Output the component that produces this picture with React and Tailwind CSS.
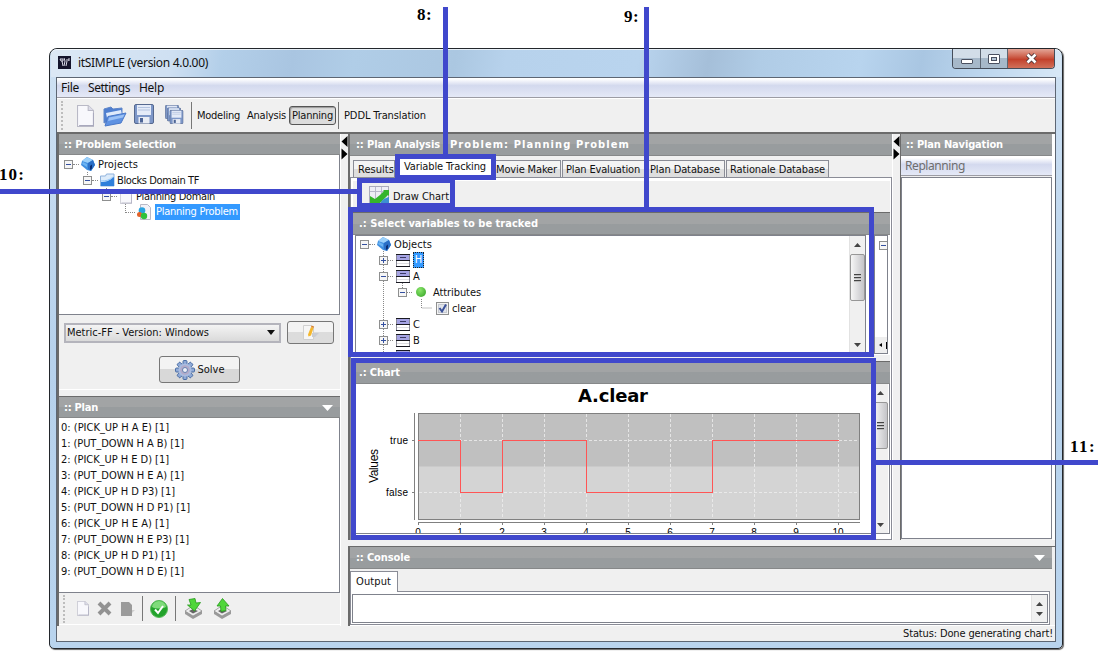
import { useLayoutEffect, useRef } from "react";
import clsx from "clsx";

/* Text set to a given pixel width by evening out its letter spacing. */
function T({ w, className, children }) {
  const ref = useRef(null);
  useLayoutEffect(() => {
    const el = ref.current;
    el.style.letterSpacing = "0px";
    const natural = el.getBoundingClientRect().width;
    el.style.letterSpacing = `${(w - natural) / el.textContent.length}px`;
  }, [w]);
  return (
    <span ref={ref} className={clsx("inline-block shrink-0 whitespace-pre", className)}>
      {children}
    </span>
  );
}

/* ---------- icons ---------- */
const PageIcon = ({ className }) => (
  <svg viewBox="0 0 16 22" preserveAspectRatio="none" className={className}>
    <path d="M.5.5h10l5 5v16H.5z" fill="#f8f8fc" stroke="#b9b9c6" />
    <path d="M10.500.5v5h5" fill="#dcdce8" stroke="#b9b9c6" />
    <path d="M2 20.500h13.500V8" fill="none" stroke="#a9a9bd" />
  </svg>
);
const FolderIcon = () => (
  <svg width="24" height="22" viewBox="0 0 24 22">
    <path d="M1 18V4l7-2 2 2 9-1v6z" fill="#4f7fd0" stroke="#5f86c8" />
    <path d="M3 8l15-3 1 5-14 8z" fill="#dfeafb" />
    <path d="M5 11.500L23 8l-5 10L2 21z" fill="#5f92e2" stroke="#4a78c8" />
    <path d="M6 12.500L21.500 9.500l-1.500 3L5 16z" fill="#9cc2f6" />
  </svg>
);
const Floppy = ({ x = 0, y = 0, s = 20 }) => (
  <svg x={x} y={y} width={s} height={s} viewBox="0 0 20 20">
    <rect x=".5" y=".5" width="19" height="19" rx="1.500" fill="#7d97c8" stroke="#56698f" />
    <rect x="3" y="1" width="14" height="10" fill="#e4ebf8" />
    <path d="M4 3.500h12M4 6h12" stroke="#b4c4e0" />
    <rect x="4.500" y="13" width="11" height="6.500" fill="#e8ecf4" />
    <rect x="6" y="14" width="3" height="4.500" fill="#4d6596" />
  </svg>
);
const SaveAllIcon = () => (
  <svg width="19" height="20" viewBox="0 0 19 20">
    <Floppy s={14} />
    <Floppy x={2} y={2.500} s={14} />
    <Floppy x={4.500} y={5} s={14} />
  </svg>
);
const CubeIcon = () => (
  <svg width="14" height="16" viewBox="0 0 14 16" className="shrink-0">
    <path d="M1 5l5-4 6 3 2 5-4 6-4-1-6-5z" fill="#3f8fe0" />
    <path d="M1 5l5-4 6 3-5 3z" fill="#9bd0fa" />
    <path d="M7 7l5-3 2 5-4 6-3-2z" fill="#2a6fc6" />
    <path d="M9 10l2-1.500v4l-2 1.500z" fill="#0b2f74" />
    <path d="M2 6l4 2v3L1 8z" fill="#6cb4f3" />
  </svg>
);
const BlueFolder = () => (
  <svg width="15" height="14" viewBox="0 0 15 14" className="shrink-0">
    <path d="M.5 3h5l1-2h7.500v12H.5z" fill="#dcebfa" stroke="#8fb2dc" />
    <path d="M1 9c5 0 8-1 13-5v9H1z" fill="#2f7fdb" />
    <path d="M1 8c5 0 9-1 12-4" stroke="#8fc4f8" fill="none" />
  </svg>
);
const ProblemIcon = () => (
  <svg width="14" height="16" viewBox="0 0 14 16" className="shrink-0">
    <path d="M3.500.500h7l3 3v12h-10z" fill="#f2f2f8" stroke="#b9b9c6" />
    <circle cx="5" cy="6.500" r="3.300" fill="#29a3e0" />
    <circle cx="2.500" cy="10.500" r="2.500" fill="#e2622a" />
    <circle cx="7" cy="12" r="3.200" fill="#2fc13b" />
  </svg>
);
const ClassIcon = () => (
  <svg width="14" height="13" viewBox="0 0 14 13" className="shrink-0">
    <rect x=".5" y=".5" width="13" height="12" fill="#fff" stroke="#8a8a96" />
    <rect x="1" y="1" width="12" height="5" fill="#a5a3e3" />
    <path d="M0 .5h14M0 6.500h14M0 12.500h14" stroke="#1a1a22" />
    <path d="M4 3.500h6" stroke="#3a3a66" />
    <path d="M1 9.500h12" stroke="#dcdce0" />
  </svg>
);
const Expander = ({ plus, className }) => (
  <svg width="9" height="9" viewBox="0 0 9 9" className={clsx("shrink-0", className)}>
    <rect x=".5" y=".5" width="8" height="8" fill="#f6f6f6" stroke="#8e8f8f" />
    <path d={plus ? "M2 4.500h5M4.500 2v5" : "M2 4.500h5"} stroke="#3450a0" />
  </svg>
);
const Dots = ({ className }) => <i className={clsx("block h-px shrink-0 border-t border-dotted border-[#888]", className)} />;
const Gear = () => (
  <svg width="20" height="20" viewBox="-10 -10 20 20">
    {[0, 45, 90, 135].map((a) => (
      <rect key={a} x="-2" y="-9.500" width="4" height="19" rx="1" fill="#8fa9d6" stroke="#3f659f" strokeWidth=".9" transform={`rotate(${a})`} />
    ))}
    <circle r="6.600" fill="#a9bce0" />
    <circle r="4.800" fill="#b3abc9" />
    <circle r="2.500" fill="#eef1f8" stroke="#6581b0" />
  </svg>
);
const EditIcon = () => (
  <svg width="16" height="15" viewBox="0 0 16 15">
    <path d="M.500.500h8l2 2v12H.500z" fill="#f6f6f6" stroke="#d0d0d0" />
    <path d="M9 8h7l-4 4H9z" fill="#c9ccd2" />
    <path d="M5 9.500L8 2l2.500 1L8 10.500l-2.500 1z" fill="#f5b82e" />
    <path d="M8 2l.6-1.500 2.500 1-.6 1.500z" fill="#d9822f" />
  </svg>
);
const Tri = ({ dir, className }) => (
  <svg viewBox="0 0 10 6" preserveAspectRatio="none" className={clsx("block shrink-0", className)}>
    <path d={dir === "up" ? "M0 6l5-6 5 6z" : "M0 0h10l-5 6z"} fill="currentColor" />
  </svg>
);
const ChartIcon = () => (
  <svg width="20" height="20" viewBox="0 0 20 20" className="shrink-0">
    <rect x=".5" y=".5" width="19" height="19" fill="#eeeef6" stroke="#aaaabc" />
    <path d="M6.500 1v18M12.500 1v18M1 5.500h18" stroke="#b9b9cc" />
    <path d="M1 10l5 3 5-4 4-4-1-1h6v6l-1-1-9 9-3-1-3 3-3-2z" fill="#35b52c" />
    <path d="M11 20c0-5 4-8 9-9v9z" fill="#3d8fd2" />
  </svg>
);
const CheckBall = () => (
  <svg width="18" height="18" viewBox="0 0 18 18">
    <circle cx="9" cy="9" r="8.500" fill="#22a32b" stroke="#58b95a" />
    <path d="M2 7a7 6 0 0 1 14 0c-4 2-10 2-14 0z" fill="#7fdb7b" />
    <path d="M5 9.500l3 3.500 5-7" fill="none" stroke="#fff" strokeWidth="2" />
  </svg>
);
const Disk = ({ up }) => (
  <svg width="19" height="21" viewBox="0 0 19 21">
    <path d="M1 13l6-4h5l6 4v3l-9 5-8-5z" fill="#9a9a9a" />
    <path d="M1 13l6-4h5l6 4-9 5z" fill="#ededed" stroke="#858585" strokeWidth=".6" />
    <path d="M5 13l4-2 5 2-5 2.500z" fill="#666" />
    <path d={up ? "M9.500.500L16 8h-3.500l.5 4.500-5 1L7.500 8H4z" : "M5 1.500l6-1 1 4.500 4.500-.5L10.500 13 3.500 7H7z"} fill="#4fd63a" stroke="#26991c" strokeWidth=".8" />
  </svg>
);

/* ---------- shared parts ---------- */
const Header = ({ title, w, arrow, className, children }) => (
  <div className={clsx("flex shrink-0 items-center border-b border-[#868889] bg-linear-to-b from-[#a2a4a5] from-50% to-[#989c9e] to-50% pr-[7px] font-bold text-white", className)}>
    <T w={w}>{title}</T>
    {children}
    {arrow && <Tri className="ml-auto h-[6px] w-[11px]" />}
  </div>
);
const Grip = ({ className }) => <i className={clsx("block w-0 shrink-0 border-l-2 border-dotted border-[#bdbdbd]", className)} />;
const Splitter = ({ className }) => (
  <div className={clsx("shrink-0 bg-[#f0f0f0]", className)}>
    <svg width="7" height="24" viewBox="0 0 7 24" className="block">
      <path d="M6.500 0v11L.5 5.500zM.5 12.500v11L6.500 18z" fill="#000" />
    </svg>
  </div>
);
const Scrollbar = ({ thumb, className }) => (
  <div className={clsx("flex w-[16px] shrink-0 flex-col items-center justify-between border-l border-[#e2e2e2] bg-[#f0f0f0] text-[#444]", className)}>
    <Tri dir="up" className="mt-[7px] h-[4px] w-[7px]" />
    {thumb && (
      <div className="mt-[7px] mb-auto flex h-[47px] w-[15px] shrink-0 flex-col items-center justify-center gap-px rounded-[2px] border border-[#979797] bg-linear-to-r from-[#f6f6f6] to-[#c4c4c8]">
        {[0, 1, 2].map((i) => <i key={i} className="h-[2px] w-[7px] border-t border-[#444] bg-[#bbb]" />)}
      </div>
    )}
    <Tri className="mb-[6px] h-[4px] w-[7px]" />
  </div>
);
const Frame = ({ className }) => <div className={clsx("absolute border-[5px] border-[#4048cc]", className)} />;
const Bar = ({ className }) => <div className={clsx("absolute bg-[#4048cc]", className)} />;

const plan = [
  ["0: (PICK_UP H A E) [1]", 108], ["1: (PUT_DOWN H A B) [1]", 123], ["2: (PICK_UP H E D) [1]", 108],
  ["3: (PUT_DOWN H E A) [1]", 123], ["4: (PICK_UP H D P3) [1]", 114], ["5: (PUT_DOWN H D P1) [1]", 129],
  ["6: (PICK_UP H E A) [1]", 108], ["7: (PUT_DOWN H E P3) [1]", 128], ["8: (PICK_UP H D P1) [1]", 114],
  ["9: (PUT_DOWN H D E) [1]", 123],
];

function LeftColumn() {
  return (
    <div className="flex w-[283px] shrink-0 flex-col border-l-2 border-[#6b6b6b]">
      <Header title=":: Problem Selection" w={112} className="h-[21px] pt-[2px] pl-[5px]" />
      <div className="relative h-[160px] shrink-0 border-r border-b border-[#7f828c] bg-white pt-[1px]">
        <svg width="100" height="70" className="absolute top-0 left-0">
          <path d="M28.500 17v4M47.500 33v4M66.500 49v9" stroke="#888" strokeDasharray="1 1" />
        </svg>
        <div className="flex h-4 items-center pl-[5px]"><Expander /><Dots className="mr-[2px] w-[6px]" /><CubeIcon /><T w={40} className="mt-[2px] ml-[3px]">Projects</T></div>
        <div className="flex h-4 items-center pl-[24px]"><Expander /><Dots className="mr-[2px] w-[6px]" /><BlueFolder /><T w={82} className="mt-[2px] ml-[2px]">Blocks Domain TF</T></div>
        <div className="flex h-4 items-center pl-[43px]"><Expander /><Dots className="mr-[3px] w-[6px]" /><PageIcon className="h-[15px] w-[12px] shrink-0" /><T w={79} className="mt-[2px] ml-[4px]">Planning Domain</T></div>
        <div className="flex h-4 items-center pl-[67px]"><Dots className="mr-[2px] w-[9px]" /><ProblemIcon />
          <span className="ml-[4px] flex h-4 w-[85px] items-center bg-[#3399ff] pl-px text-white"><T w={82}>Planning Problem</T></span>
        </div>
      </div>
      <div className="flex h-[75px] shrink-0 flex-col items-center border-b border-white pt-[6px]">
        <div className="flex w-full items-center pl-[5px]">
          <div className="flex h-[20px] w-[217px] items-center justify-between border-2 border-[#b4b4bc] bg-linear-to-b from-[#f4f4f4] to-[#dadada] pr-[4px] pl-px">
            <T w={142}>Metric-FF - Version: Windows</T><Tri className="h-[5px] w-[8px]" />
          </div>
          <button className="ml-[6px] flex h-[23px] w-[47px] items-center justify-center rounded-[3px] border border-[#777] bg-linear-to-b from-[#f3f3f3] from-50% to-[#dcdcdc] to-50%"><EditIcon /></button>
        </div>
        <button className="mt-[12px] flex h-[27px] w-[81px] items-center justify-center gap-[3px] rounded-[3px] border border-[#777] bg-linear-to-b from-[#f3f3f3] from-50% to-[#d8d8d8] to-50%"><Gear /><T w={27}>Solve</T></button>
      </div>
      <div className="mt-[6px] h-px shrink-0 bg-[#6b6b6b]" />
      <Header title=":: Plan" w={34} arrow className="h-[21px] pt-px pl-[5px]" />
      <div className="h-[175px] shrink-0 border-r border-b border-[#7f828c] bg-white pt-px pl-[2px]">
        {plan.map(([t, w]) => <div key={t} className="flex h-4 items-center"><T w={w} className="mt-px">{t}</T></div>)}
      </div>
      <div className="flex h-[31px] shrink-0 items-center pl-[4px]">
        <Grip className="h-[28px]" />
        <PageIcon className="ml-[12px] h-[15px] w-[12px]" />
        <svg width="15" height="15" viewBox="0 0 15 15" className="ml-[8px]"><path d="M2 2l11 11M13 2L2 13" stroke="#929292" strokeWidth="4" /></svg>
        <svg width="15" height="14" viewBox="0 0 15 14" className="ml-[8px]"><path d="M1 0h8l3 3v11H1z" fill="#9b9b9b" /><path d="M12 8h3l-3 3z" fill="#cfcfcf" /></svg>
        <i className="ml-[7px] h-[25px] w-px bg-[#777]" />
        <span className="ml-[7px]"><CheckBall /></span>
        <i className="ml-[7px] h-[25px] w-px bg-[#777]" />
        <span className="ml-[8px]"><Disk /></span>
        <span className="ml-[10px]"><Disk up /></span>
      </div>
      <div className="h-px bg-white" />
    </div>
  );
}

const Tab = ({ w, t, pad, className }) => (
  <div className={clsx("flex h-[17px] shrink-0 items-center border-t border-r border-l border-[#8a8c96] bg-linear-to-b from-[#f4f4f4] from-50% to-[#dedede] to-50%", className)}>
    <T w={w} className={clsx("mt-px", pad)}>{t}</T>
  </div>
);

const TreeRow = ({ label, w, plus, children }) => (
  <div className="flex h-4 shrink-0 items-center pl-[23px]"><Expander plus={plus} /><Dots className="mr-[3px] w-[5px]" /><ClassIcon />
    {children || <T w={w} className="mt-[2px] ml-[3px]">{label}</T>}
  </div>
);

function VariableTree() {
  return (
    <div className="flex h-[119px] w-[511px] shrink-0 border border-[#7f828c] bg-white">
      <div className="relative flex min-w-0 grow flex-col overflow-hidden">
        <svg width="120" height="118" className="absolute top-0 left-0">
          <path d="M27.500 15v104M46.500 47v6M65.500 63v9h10" fill="none" stroke="#888" strokeDasharray="1 1" />
        </svg>
        <div className="relative flex flex-col">
          <div className="flex h-4 items-center pl-[4px]"><Expander /><Dots className="mr-[2px] w-[6px]" /><CubeIcon /><T w={38} className="mt-[2px] ml-[3px]">Objects</T></div>
          <TreeRow plus><span className="ml-[3px] flex h-4 w-[11px] items-center justify-center border border-dotted border-[#222] bg-[#3399ff] text-white">H</span></TreeRow>
          <TreeRow label="A" w={7} />
          <div className="flex h-4 items-center pl-[42px]"><Expander /><Dots className="mr-[4px] w-[5px]" /><i className="size-[10px] rounded-full bg-radial-[at_40%_30%] from-[#8be66b] to-[#2f9f22]" /><T w={48} className="mt-[2px] ml-[7px]">Attributes</T></div>
          <div className="flex h-4 items-center pl-[80px]">
            <svg width="13" height="13" viewBox="0 0 13 13"><rect x=".5" y=".5" width="12" height="12" fill="#f4f4f4" stroke="#8e8f8f" /><rect x="2.500" y="2.500" width="8" height="8" fill="#e0e4ea" stroke="#c6c9d0" /><path d="M3.500 6l2.500 3.500L10 2.500" fill="none" stroke="#3b5199" strokeWidth="2" /></svg>
            <T w={24} className="mt-[2px] ml-[3px]">clear</T>
          </div>
          <TreeRow plus label="C" w={8} />
          <TreeRow plus label="B" w={7} />
          <TreeRow plus label="D" w={7} />
        </div>
      </div>
      <Scrollbar thumb />
    </div>
  );
}

function Chart() {
  const x = (i) => 62.500 + 42 * i;
  const steps = [[0, 1, 56], [1, 2, 108], [2, 4, 56], [4, 7, 108], [7, 10, 56]];
  return (
    <svg width="516" height="149" viewBox="0 0 516 149" className="block shrink-0 bg-white">
      <text x="222" y="17.500" textLength="70" className="font-['DejaVu_Sans'] text-[18px] font-bold [font-stretch:normal]">A.clear</text>
      <rect x="62.500" y="29.500" width="441" height="106" fill="#d4d4d4" />
      <rect x="62.500" y="29.500" width="441" height="53" fill="#c0c0c0" />
      <g stroke="#efefef" strokeDasharray="3 2" opacity=".8">
        {[1, 2, 3, 4, 5, 6, 7, 8, 9, 10].map((i) => <path key={i} d={`M${x(i)} 30v105`} />)}
        <path d="M63 56.500h441M63 108.500h441" />
      </g>
      <rect x="62.500" y="29.500" width="441" height="106" fill="none" stroke="#808080" />
      <path d="M58.500 29v107M56 56.500h3M56 108.500h3M62 138.500h442" stroke="#808080" fill="none" />
      <g fill="#ff5555">
        {steps.map(([a, b, y]) => <rect key={a} x={x(a) - 0.5} y={y} width={x(b) - x(a) + 1} height="1" />)}
        {[1, 2, 4, 7].map((i) => <rect key={i} x={x(i) - 0.5} y="56" width="1" height="53" />)}
      </g>
      <g className="font-['Liberation_Sans',sans-serif] text-[10px]">
        <text x="52" y="60" textAnchor="end" textLength="18">true</text>
        <text x="52" y="112" textAnchor="end" textLength="22">false</text>
        {[0, 1, 2, 3, 4, 5, 6, 7, 8, 9, 10].map((i) => (
          <g key={i}><path d={`M${x(i)} 138v3`} stroke="#808080" /><text x={x(i) - 0.5} y="151.500" textAnchor="middle">{i}</text></g>
        ))}
      </g>
      <text transform="translate(22 99) rotate(-90)" textLength="34" className="font-['Liberation_Sans',sans-serif] text-[12px]">Values</text>
    </svg>
  );
}

function Analysis() {
  return (
    <div className="flex h-[406px] w-[547px] shrink-0 flex-col border-l-2 border-[#6b6b6b]">
      <Header title=":: Plan Analysis" w={84} className="h-[22px] pt-px pl-[6px]"><T w={180} className="ml-[10px]">Problem: Planning Problem</T></Header>
      <div className="flex h-[21px] shrink-0 items-end pl-[3px]">
        <Tab t="Results" w={36} pad="ml-[4px]" className="w-[42px]" />
        <div className="flex h-[20px] w-[99px] shrink-0 items-center bg-white"><T w={82} className="ml-[9px]">Variable Tracking</T></div>
        <Tab t="Movie Maker" w={61} pad="ml-[2px]" className="w-[67px] border-l-0" />
        <Tab t="Plan Evaluation" w={74} pad="ml-[3px]" className="ml-px w-[83px]" />
        <Tab t="Plan Database" w={70} pad="ml-[3px]" className="ml-px w-[79px]" />
        <Tab t="Rationale Database" w={95} pad="ml-[3px]" className="ml-px w-[103px]" />
      </div>
      <div className="flex w-[542px] grow flex-col border border-[#8a8c96] bg-white pt-[3px] pr-[1px] pl-[2px]">
        <div className="flex h-[31px] shrink-0 items-start bg-[#f0f0f0] pt-[5px] pl-[16px]"><ChartIcon /><T w={56} className="mt-[4px] ml-[4px]">Draw Chart</T></div>
        <Header title=".: Select variables to be tracked" w={179} className="h-[23px] border-t border-t-[#6b6b6b] pl-[6px]" />
        <div className="flex h-[120px] shrink-0 bg-white pl-[2px]">
          <VariableTree />
          <div className="ml-[8px] flex h-[119px] w-[14px] flex-col justify-between overflow-hidden border border-[#7f828c] bg-white">
            <Expander className="mt-[5px] ml-[4px]" />
            <div className="flex h-[16px] items-center gap-[4px] bg-[#eee] pl-[4px]">
              <svg width="3" height="4" className="shrink-0"><path d="M3 0v4L0 2z" /></svg><i className="h-[7px] w-px bg-black" />
            </div>
          </div>
        </div>
        <div className="h-[6px] shrink-0 bg-[#f0f0f0]" />
        <Header title=".: Chart" w={41} className="h-[23px] border-t border-t-[#6b6b6b] pl-[6px]" />
        <div className="flex h-[150px] shrink-0 border-r border-b border-[#7f828c] pl-[3px]">
          <Chart />
          <Scrollbar thumb />
        </div>
      </div>
    </div>
  );
}

function Console() {
  return (
    <div className="mt-[6px] flex grow flex-col border-t border-l-2 border-[#6b6b6b]">
      <Header title=":: Console" w={54} arrow className="mr-[3px] h-[22px] pl-[6px]" />
      <div className="flex h-[22px] shrink-0 items-end">
        <div className="relative z-10 -mb-px flex h-[21px] w-[48px] items-center border-t border-r border-l border-[#8a8c96] bg-white pl-[5px]"><T w={35}>Output</T></div>
      </div>
      <div className="mr-[5px] h-[34px] border border-[#8a8c96] bg-white pt-[2px] pr-px pl-px">
        <div className="flex h-[29px] justify-end border border-[#7f828c] bg-white"><Scrollbar /></div>
      </div>
      <div className="grow bg-white" />
    </div>
  );
}

export default function App() {
  return (
    <div className="relative h-[651px] w-[1103px] overflow-hidden bg-white pt-[48px] pl-[49px] font-['DejaVu_Sans_Condensed','DejaVu_Sans',sans-serif] text-[11px] leading-[14px] text-[#111] [font-stretch:semi-condensed]">
      <div className="flex h-[601px] w-[1014px] flex-col rounded-[8px] rounded-b-[5px] border border-[#23272c] bg-linear-to-b from-[#cfe1f3] via-[#b7d2ec] to-[#b9d4ee] px-[6px] shadow-[1px_1px_1px_#666]">
        <div className="-mx-[5px] flex h-[28px] shrink-0 items-start rounded-t-[6px] border-t border-white/70 bg-[linear-gradient(100deg,#dce8f5_0%,#cfe0f2_12%,#b3cfe9_17%,#a9c5e1_24%,#b0cde7_30%,#abc7e1_40%,#b7d2ec_45%,#b9d4ee_58%,#a5bfd9_65%,#b0cce6_70%,#b8d4ee_80%,#a9c6e2_86%,#bcd6ee_92%,#d8e8f6_100%)] px-[7px]">
          <svg width="13" height="13" viewBox="0 0 13 13" className="mt-[6px]"><rect width="13" height="13" fill="#14142c" /><path d="M2 3h3v2H3zM4 5l1 5M6 2l1 3-1 5M8 4h3M9 5l-1 5M11 2v3" stroke="#dadae8" fill="none" /></svg>
          <T w={130} className="mt-[5px] ml-[7px] font-['Noto_Sans',sans-serif] text-[12px] leading-[16px]">itSIMPLE (version 4.0.00)</T>
          <div className="-mt-px -mr-[1px] ml-auto flex h-[20px] w-[103px] overflow-hidden rounded-b-[4px] border border-t-0 border-[#454d5a]">
            <div className="flex w-[28px] items-center justify-center border-r border-[#5c6673] bg-linear-to-b from-[#d2dde8] from-45% to-[#a6b8c9] to-50% pt-[5px]"><i className="h-[5px] w-[12px] rounded-[1px] border border-[#4a5060] bg-white" /></div>
            <div className="flex w-[27px] items-center justify-center border-r border-[#5c6673] bg-linear-to-b from-[#d2dde8] from-45% to-[#a6b8c9] to-50%"><i className="flex h-[10px] w-[12px] items-center justify-center rounded-[1px] border border-[#4a5060] bg-white"><b className="h-[4px] w-[6px] border border-[#4a5060] bg-[#b4c4d4]" /></i></div>
            <div className="flex grow items-center justify-center bg-linear-to-b from-[#e2a598] via-[#c3412c] via-55% to-[#d0705a]">
              <svg width="13" height="11" viewBox="0 0 13 11"><path d="M2.500 1.500l8 8M10.500 1.500l-8 8" stroke="#4d3438" strokeWidth="4.400" /><path d="M2.500 1.500l8 8M10.500 1.500l-8 8" stroke="#fff" strokeWidth="2.600" /></svg>
            </div>
          </div>
        </div>
        <div className="flex h-[565px] w-[1000px] shrink-0 flex-col border border-[#5d6673] bg-[#f0f0f0]">
          <div className="flex h-[20px] shrink-0 items-center border-b border-[#9c9ca4] bg-linear-to-b from-white from-5% via-[#d3d9ee] via-40% to-[#e5e9f7] pl-[4px] font-['Noto_Sans',sans-serif] text-[12px]">
            <T w={18}>File</T><T w={42} className="ml-[9px]">Settings</T><T w={25} className="ml-[9px]">Help</T>
          </div>
          <div className="flex h-[34px] shrink-0 items-center border-t border-white pl-[4px]">
            <Grip className="h-[29px]" />
            <PageIcon className="ml-[14px] h-[22px] w-[17px]" />
            <span className="ml-[9px]"><FolderIcon /></span>
            <svg width="20" height="20" className="ml-[7px] -mt-[3px]"><Floppy /></svg>
            <span className="-mt-[2px] ml-[11px]"><SaveAllIcon /></span>
            <i className="ml-[7px] h-[27px] w-px bg-[#777]" />
            <T w={43} className="ml-[5px]">Modeling</T><T w={39} className="ml-[7px]">Analysis</T>
            <span className="ml-[3px] flex h-[19px] w-[47px] items-center justify-center rounded-[3px] border border-[#555] bg-[#dcdcdc] shadow-[inset_1px_1px_1px_#999]"><T w={41}>Planning</T></span>
            <i className="ml-[2px] h-[27px] w-px bg-[#777]" />
            <T w={82} className="ml-[5px]">PDDL Translation</T>
          </div>
          <div className="h-[2px] shrink-0 bg-[#6b6b6b]" />
          <div className="flex h-[492px] shrink-0">
            <LeftColumn />
            <div className="w-px bg-white" />
            <Splitter className="w-[7px] pt-[2px]" />
            <div className="flex grow flex-col">
              <div className="flex h-[406px] shrink-0">
                <Analysis />
                <Splitter className="-ml-[3px] w-[8px] border-l border-white pt-[2px]" />
                <div className="flex w-[152px] shrink-0 flex-col border-l border-[#6b6b6b]">
                  <Header title=":: Plan Navigation" w={97} className="h-[22px] pt-px pl-[5px]" />
                  <div className="flex h-[20px] shrink-0 items-center border-b border-[#9c9ca4] bg-linear-to-b from-white from-10% via-[#d3d9ee] via-45% to-[#e5e9f7] pl-[4px] text-[#6e6e6e]"><T w={60} className="font-['Noto_Sans',sans-serif] text-[12px]">Replanning</T></div>
                  <div className="mt-px h-[362px] border border-[#7f828c] bg-white" />
                </div>
                <div className="grow bg-white" />
              </div>
              <Console />
            </div>
          </div>
          <div className="flex h-[15px] shrink-0 items-center justify-end pr-[2px]"><T w={150}>Status: Done generating chart!</T></div>
        </div>
      </div>

      {/* numbered callouts */}
      <Bar className="top-[7px] left-[443px] h-[148px] w-[5px]" />
      <Frame className="top-[154px] left-[395px] h-[26px] w-[101px]" />
      <Bar className="top-[7px] left-[644px] h-[201px] w-[5px]" />
      <Frame className="top-[207px] left-[348px] h-[150px] w-[526px]" />
      <Bar className="top-[189px] left-0 h-[5px] w-[358px]" />
      <Frame className="top-[178px] left-[357px] h-[30px] w-[98px]" />
      <Frame className="top-[358px] left-[351px] h-[182px] w-[525px]" />
      <Bar className="top-[460px] left-[875px] h-[5px] w-[223px]" />
      <div className="font-['Liberation_Serif',serif] text-[17px] leading-[18px] font-bold text-black [font-stretch:normal]">
        <span className="absolute top-[6px] left-[417px]"><T w={15}>8:</T></span>
        <span className="absolute top-[8px] left-[624px]"><T w={15}>9:</T></span>
        <span className="absolute top-[166px] left-[-1px]"><T w={26}>10:</T></span>
        <span className="absolute top-[438px] left-[1070px]"><T w={26}>11:</T></span>
      </div>
    </div>
  );
}
